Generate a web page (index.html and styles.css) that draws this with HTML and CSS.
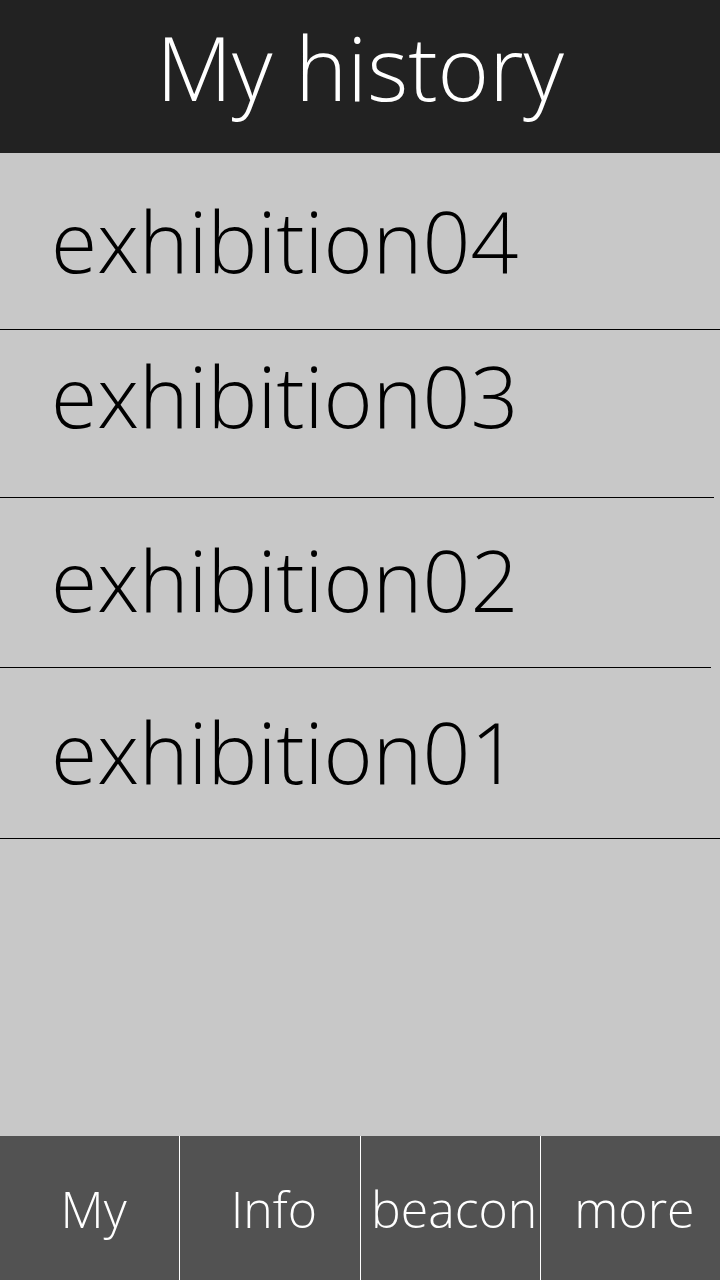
FILE: index.html
```html
<!DOCTYPE html>
<html lang="en">
<head>
    <meta charset="UTF-8">
    <meta name="viewport" content="width=device-width, initial-scale=1.0">
    <title>My history</title>
    <link rel="stylesheet" href="styles.css">
</head>
<body>
<div id="app">
    <div id="cabecalho">My history</div>

    <ul id="historico">
        <li class="item item-1">exhibition04</li>
        <li class="item item-2">exhibition03</li>
        <li class="item item-3">exhibition02</li>
        <li class="item item-4">exhibition01</li>
    </ul>

    <div id="menu">
        <a class="aba aba-my">My</a>
        <a class="aba aba-info">Info</a>
        <a class="aba aba-beacon">beacon</a>
        <a class="aba aba-more">more</a>
    </div>
</div>
</body>
</html>
```

FILE: styles.css
```css
* {
    font-family: "Open Sans", "DejaVu Sans", sans-serif;
    font-weight: 300;
    cursor: default;
}

body {
    margin: 0;
    background-color: #c8c8c8;
}

#app {
    display: flex;
    flex-direction: column;
    height: 1280px;
}

#cabecalho {
    height: 153px;
    box-sizing: border-box;
    padding-top: 23px;
    background-color: #222;
    color: #fff;
    font-size: 88px;
    line-height: 1;
    text-align: center;
}

#historico {
    flex-grow: 1;
    list-style: none;
    margin: 0;
    padding: 0;
}

.item {
    box-sizing: border-box;
    padding-left: 51px;
    border-bottom: 1px solid #000;
    color: #000;
    font-size: 84px;
    line-height: 1;
}

.item-1 {
    height: 177px;
    padding-top: 46px;
}

.item-2 {
    height: 168px;
    padding-top: 24px;
    margin-right: 6px;
}

.item-3 {
    height: 170px;
    padding-top: 40px;
    margin-right: 9px;
}

.item-4 {
    height: 171px;
    padding-top: 42px;
}

#menu {
    display: flex;
    height: 144px;
    background-color: #525252;
}

.aba {
    flex: 1;
    box-sizing: border-box;
    padding-top: 48px;
    padding-left: 8px;
    color: #fff;
    font-size: 50px;
    line-height: 1;
    text-align: center;
}

.aba + .aba {
    border-left: 1px solid #fff;
}
```
